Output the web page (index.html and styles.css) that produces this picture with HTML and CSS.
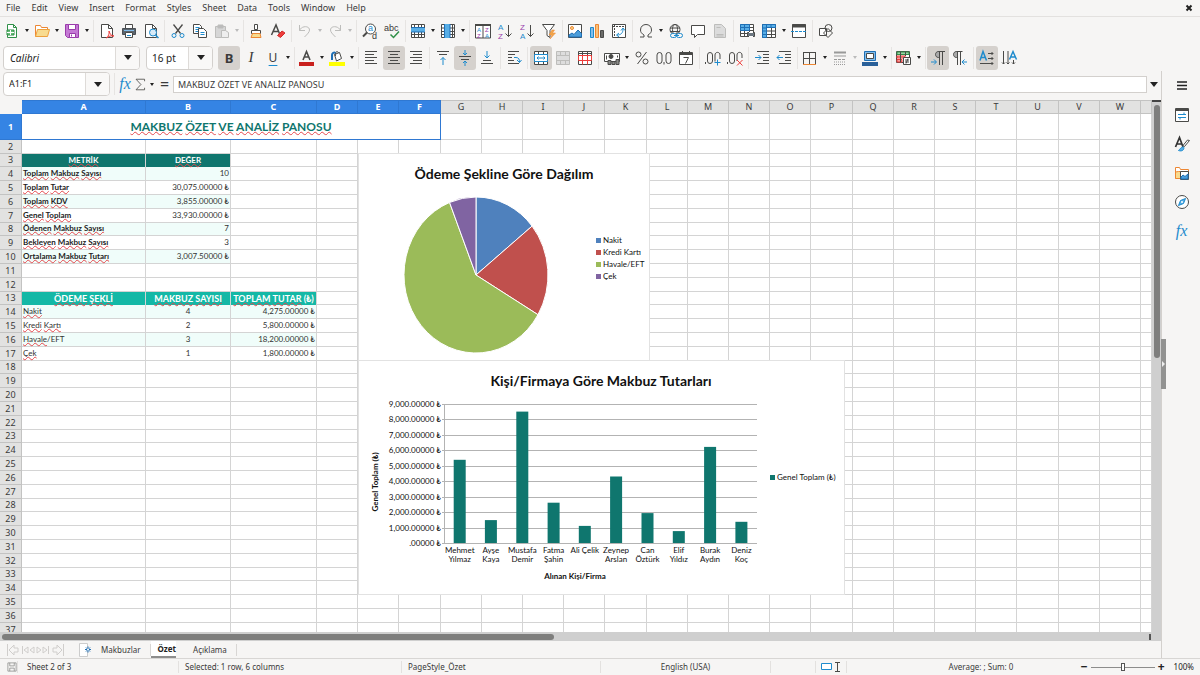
FILE: index.html
```html
<!DOCTYPE html>
<html lang="en">
<head>
<meta charset="utf-8">
<title>Özet</title>
<link rel="stylesheet" href="styles.css">
</head>
<body>
<header class="menubar">
  <nav class="menus">
    <button>File</button><button>Edit</button><button>View</button><button>Insert</button><button>Format</button><button>Styles</button><button>Sheet</button><button>Data</button><button>Tools</button><button>Window</button><button>Help</button>
  </nav>
  <button class="close" aria-label="Close document"><svg class="ico-small" viewBox="0 0 8 8"><path d="M1.500 1.500l5 5M6.500 1.500l-5 5" stroke="#222" stroke-width="2"/></svg></button>
</header>

<div class="toolbar" role="toolbar" aria-label="Standard">
  <button class="tool" aria-label="New"><svg viewBox="0 0 16 16"><path d="M3.500 1.500h6l3 3v10h-9z" fill="#fff" stroke="#309048"/><path d="M9.500 1.500v3h3" stroke="#309048"/><path d="M3 7h7v5H3z" fill="#6abf7b" stroke="#309048"/><path d="M3 9.500h7M6.500 7v5" stroke="#fff"/></svg></button><button class="drop" aria-label="New options"></button>
  <button class="tool" aria-label="Open"><svg viewBox="0 0 16 16"><path d="M1.500 13.500v-11h5l1 2h6v3" fill="#fff" stroke="#ed8733"/><path d="M1.500 13.500l2-7h12l-2 7z" fill="#f8db8f" stroke="#eda03c"/></svg></button><button class="drop" aria-label="Open options"></button>
  <button class="tool" aria-label="Save"><svg viewBox="0 0 16 16"><path d="M1.500 1.500h13v13h-11l-2-2z" fill="#c479d4" stroke="#9a3bab"/><path d="M4.500 1.500h7v5h-7z" fill="#fff" stroke="#9a3bab"/><path d="M5.500 14.500v-4h6v4z" fill="#fff" stroke="#9a3bab"/><path d="M7.500 11.500v2" stroke="#9a3bab"/></svg></button><button class="drop" aria-label="Save options"></button>
  <span class="sep"></span>
  <button class="tool" aria-label="Export as PDF"><svg viewBox="0 0 16 16"><path d="M2.500 1.500h7l4 4v9h-11z" fill="#fff"/><path d="M9.500 1.500v4h4"/><path d="M7.500 15c2-2 3-4 2.500-7 1 3 2 5 5 5-3-.500-5 0-7.500 2z" stroke="#ed3d3b" fill="#fff"/></svg></button>
  <button class="tool" aria-label="Print"><svg viewBox="0 0 16 16"><path d="M4.500 5v-3.500h7V5" fill="#fff"/><path d="M1.500 5.500h13v6h-13z" fill="#5b6670" stroke="#4a4f54"/><path d="M4.500 9.500h7v5h-7z" fill="#fff"/><path d="M3 7.500h10" stroke="#83beec"/><path d="M6 12.500h4" stroke="#1e8bcd"/></svg></button>
  <button class="tool" aria-label="Print preview"><svg viewBox="0 0 16 16"><path d="M2.500 1.500h7l4 4v9h-11z" fill="#fff"/><path d="M9.500 1.500v4h4"/><circle cx="10" cy="9.500" r="3.500" fill="#d8ebf8" stroke="#1e8bcd"/><path d="M12.500 12l3 3" stroke="#1e8bcd" stroke-width="1.500"/></svg></button>
  <span class="sep"></span>
  <button class="tool" aria-label="Cut"><svg viewBox="0 0 16 16"><path d="M3.500 1.500l7 9M12.500 1.500l-7 9" stroke-width="1.300"/><circle cx="4" cy="12.500" r="2" stroke="#1e8bcd"/><circle cx="12" cy="12.500" r="2" stroke="#1e8bcd"/></svg></button>
  <button class="tool" aria-label="Copy"><svg viewBox="0 0 16 16"><path d="M1.500 1.500h6l2 2v7h-8z" fill="#fff"/><path d="M3.500 4.500h4M3.500 6.500h4M3.500 8.500h4" stroke="#1e8bcd"/><path d="M6.500 5.500h5l3 3v6h-8z" fill="#fff"/><path d="M8.500 9.500h4M8.500 11.500h4" stroke="#1e8bcd"/></svg></button>
  <button class="tool dim" aria-label="Paste" disabled><svg viewBox="0 0 16 16"><path d="M1.500 3.500h10v11h-10z" fill="#d6d6d6"/><path d="M4 2h5v3H4z" fill="#bbb"/><path d="M7.500 7.500h4l3 2v5h-7z" fill="#eee"/></svg></button><button class="drop dim" aria-label="Paste options" disabled></button>
  <span class="sep tight"></span>
  <button class="tool" aria-label="Clone formatting"><svg viewBox="0 0 16 16"><path d="M6.500 1.500h3v5h-3z" fill="#fff"/><path d="M3.500 7.500h9v3h-9z" fill="#fff"/><path d="M4.500 10.500h7.500l1 4h-10z" fill="#f8db8f" stroke="#ed8733"/></svg></button>
  <button class="tool" aria-label="Clear formatting"><svg viewBox="0 0 16 16"><path d="M1.500 12l4.500-10 4 10M3.500 8.500h5" stroke-width="1.500"/><path d="M7.500 12.500l4.500-4.500 3 2-4.500 4.500z" fill="#ed3d3b" stroke="#d12b2b"/></svg></button>
  <span class="sep"></span>
  <button class="tool dim" aria-label="Undo" disabled><svg viewBox="0 0 16 16"><path d="M2.500 2v5.500h5.500M2.500 7.500c2-5 10-5 10-.500 0 2-2 4-5 7"/></svg></button><button class="drop dim" aria-label="Undo options" disabled></button>
  <button class="tool dim" aria-label="Redo" disabled><svg viewBox="0 0 16 16"><path d="M13.500 2v5.500h-5.500M13.500 7.500c-2-5-10-5-10-.500 0 2 2 4 5 7"/></svg></button><button class="drop dim" aria-label="Redo options" disabled></button>
  <span class="sep"></span>
  <button class="tool" aria-label="Find and replace"><svg viewBox="0 0 16 16"><circle cx="8.500" cy="6" r="5" fill="#fff"/><path d="M5 9.500l-4 4" stroke-width="2"/><text x="6" y="8" class="g blue">a</text><text x="10" y="16" class="g">d</text></svg></button>
  <button class="tool" aria-label="Spelling"><svg viewBox="0 0 16 16"><text x="0" y="8" class="g abc">abc</text><path d="M6.500 11.500l3 3L15 8.500" stroke="#309048" stroke-width="1.500"/></svg></button>
  <span class="sep tight"></span>
  <button class="tool" aria-label="Row"><svg viewBox="0 0 16 16"><path d="M1.500 1.500h13v13h-13z" fill="#fff"/><path d="M1 5h14v4H1z" fill="#58aee6" stroke="none"/><path d="M1.500 11.500h13M4.500 9v5M8.500 9v5M11.500 9v5M4.500 2v3M8.500 2v3M11.500 2v3"/><path d="M1.500 4.500h13M1.500 9h13" stroke="#1e6fb5"/></svg></button><button class="drop" aria-label="Row options"></button>
  <button class="tool" aria-label="Column"><svg viewBox="0 0 16 16"><path d="M1.500 1.500h13v13h-13z" fill="#fff"/><path d="M5 1h5v14H5z" fill="#58aee6" stroke="none"/><path d="M12.500 2v12M2 5h3M2 8.500h3M2 11.500h3M10 5h4M10 8.500h4M10 11.500h4"/><path d="M4.500 1v14M10 1v14" stroke="#1e6fb5"/></svg></button><button class="drop" aria-label="Column options"></button>
  <span class="sep"></span>
  <button class="tool" aria-label="Sort"><svg viewBox="0 0 16 16"><path d="M.5 1.500h15v13.500h-15zM8 1.500v13.500" fill="#fff"/><path d="M0 2h16" stroke-width="2"/><text x="2" y="8.500" class="g s blue">A</text><text x="2" y="14.500" class="g s purple">Z</text><text x="10" y="8.500" class="g s purple">Z</text><text x="10" y="14.500" class="g s blue">A</text></svg></button>
  <button class="tool" aria-label="Sort ascending"><svg viewBox="0 0 16 16"><text x="1" y="6.500" class="g m blue">A</text><text x="1" y="15.500" class="g m purple">Z</text><path d="M11.500 2v11.500M8.500 10.500l3 3 3-3"/></svg></button>
  <button class="tool" aria-label="Sort descending"><svg viewBox="0 0 16 16"><text x="1" y="6.500" class="g m purple">Z</text><text x="1" y="15.500" class="g m blue">A</text><path d="M11.500 2v11.500M8.500 10.500l3 3 3-3"/></svg></button>
  <button class="tool" aria-label="AutoFilter"><svg viewBox="0 0 16 16"><path d="M1.500 1.500h12l-4.500 6v7l-3-2v-5z" fill="#fff"/><path d="M11 7l-3 5h3l-2 4 5.500-6h-3l2-3z" fill="#f2a64a" stroke="#ed8733" stroke-width=".5"/></svg></button>
  <span class="sep tight"></span>
  <button class="tool" aria-label="Insert image"><svg viewBox="0 0 16 16"><path d="M1.500 1.500h13v13h-13z" fill="#fff"/><circle cx="5" cy="5" r="1.500" fill="#f8db8f" stroke="#ed8733"/><path d="M2 14v-2l3-2 2 1.500 4-4.500 3.500 3.500v3.500z" fill="#4a9ddb" stroke="#1e6fb5"/></svg></button>
  <button class="tool" aria-label="Insert chart"><svg viewBox="0 0 16 16"><path d="M1.500 4.500h3v10h-3z" fill="#83beec" stroke="#1e8bcd"/><path d="M6.500 1.500h3v13h-3z" fill="#f8c27c" stroke="#ed8733"/><path d="M11.500 7.500h3v7h-3z" fill="#6b6b69"/></svg></button>
  <button class="tool" aria-label="Pivot table"><svg viewBox="0 0 16 16"><path d="M1.500 1.500h13v13h-13z" fill="#fff"/><path d="M2 3.500h12M3.500 2v12" stroke-dasharray="2 1"/><path d="M6 12c4 0 6-2 6-6M8 10l-2.500 2L8 14M10 7.500L12 5l2 2.500" stroke="#1e8bcd" fill="none"/></svg></button>
  <span class="sep"></span>
  <button class="tool" aria-label="Special character"><svg viewBox="0 0 16 16"><path d="M2 14h4v-2C3.500 10.500 2.500 9 2.500 7c0-3.500 2.500-5.500 5.500-5.500s5.500 2 5.500 5.500c0 2-1 3.500-3.500 5v2h4"/></svg></button><button class="drop" aria-label="Special character options"></button>
  <button class="tool" aria-label="Hyperlink"><svg viewBox="0 0 16 16"><circle cx="7" cy="6.500" r="5"/><ellipse cx="7" cy="6.500" rx="2.500" ry="5"/><path d="M2 5h10M2 8.500h10"/><rect x="2.500" y="10.500" width="6" height="4" rx="2" stroke="#1e8bcd" fill="#f6f5f4"/><rect x="8.500" y="10.500" width="6" height="4" rx="2" stroke="#1e8bcd" fill="#f6f5f4"/><path d="M6 12.500h5" stroke="#1e8bcd"/></svg></button>
  <button class="tool" aria-label="Comment"><svg viewBox="0 0 16 16"><path d="M1.500 2.500h13v9h-7l-3 3v-3h-3z" fill="#fff"/></svg></button>
  <button class="tool dim" aria-label="Headers and footers" disabled><svg viewBox="0 0 16 16"><path d="M2.500 1.500h7l4 4v9h-11z" fill="#dcdcdc"/><path d="M4.500 4.500h4M4.500 11.500h7M4.500 13h7"/></svg></button>
  <span class="sep"></span>
  <button class="tool" aria-label="Define print area"><svg viewBox="0 0 16 16"><path d="M1.500 1.500h13v12h-13z" fill="#fff"/><path d="M1 1h9.500v6.500H1z" fill="#58aee6" stroke="none"/><path d="M10 4.500h4.500M1.500 7.500h13M1.500 10.500h13M5.500 7.500v6M10.500 2v12"/><path d="M1.500 4.500h9M5.500 1.500v6M1.500 7.500v-6h9v6z" stroke="#1e6fb5"/><path d="M8.500 9.500h7v4h-7z" fill="#6b7680"/><path d="M10 9.500h4M10 13.500h4" stroke="#fff"/></svg></button>
  <button class="tool" aria-label="Freeze rows and columns"><svg viewBox="0 0 16 16"><path d="M1.500 1.500h13v13h-13z" fill="#fff"/><path d="M6 8h9M6 11.500h9M10.500 5v10"/><path d="M1.500 1.500h13v3h-9v10h-4z" fill="#58aee6" stroke="#1e6fb5"/><path d="M1.500 8h4M1.500 11.500h4M10 1.500V5M5.500 1.500V5h-4" stroke="#1e6fb5"/></svg></button><button class="drop" aria-label="Freeze options"></button>
  <button class="tool" aria-label="Split window"><svg viewBox="0 0 16 16"><path d="M1.500 1.500h13v13h-13z" fill="#fff"/><path d="M1 3h14" stroke-width="3"/><path d="M0 8.500h16" stroke="#1e8bcd" stroke-dasharray="3 1"/></svg></button>
  <span class="sep"></span>
  <button class="tool" aria-label="Show draw functions"><svg viewBox="0 0 16 16"><path d="M1.500 5.500h7v7h-7z" fill="#fff"/><circle cx="10.500" cy="5" r="3.500"/><path d="M10 5.500l4.500 4.500-4.500 4.500L5.500 10z"/></svg></button>
</div>

<div class="toolbar" role="toolbar" aria-label="Formatting">
  <div class="combo font"><select aria-label="Font name"><option>Calibri</option></select><span class="arrow"></span></div>
  <div class="combo size"><select aria-label="Font size"><option>16 pt</option></select><span class="arrow"></span></div>
  <button class="tool on bold" aria-label="Bold">B</button>
  <button class="tool italic" aria-label="Italic">I</button>
  <button class="tool under" aria-label="Underline">U</button><button class="drop" aria-label="Underline options"></button>
  <span class="sep tight"></span>
  <button class="tool" aria-label="Font color"><svg viewBox="0 0 16 16"><path d="M4 10L7.500 1.500 11 10M5 7h5" stroke-width="1.600"/><path d="M0 14h15" stroke="#c9211e" stroke-width="4"/></svg></button><button class="drop" aria-label="Font color options"></button>
  <button class="tool" aria-label="Background color"><svg viewBox="0 0 16 16"><path d="M5.500 4.500l5-2 2 6-5 2.500z" fill="#fff"/><path d="M6.500 6c-1-4 2-6 3-3"/><path d="M3 10V5c0-2 2-3 3.500-2" stroke="#1e6fb5" stroke-width="2"/><path d="M0 14h16" stroke="#ff0" stroke-width="4"/></svg></button><button class="drop" aria-label="Background color options"></button>
  <span class="sep"></span>
  <button class="tool" aria-label="Align left"><svg viewBox="0 0 16 16"><path d="M1 1.500h12M1 4.500h9M1 7.500h12M1 10.500h9M1 13.500h12"/></svg></button>
  <button class="tool on" aria-label="Center"><svg viewBox="0 0 16 16"><path d="M2 1.500h12M4 4.500h8M2 7.500h12M4 10.500h8M2 13.500h12"/></svg></button>
  <button class="tool" aria-label="Align right"><svg viewBox="0 0 16 16"><path d="M2 1.500h12M5 4.500h9M2 7.500h12M5 10.500h9M2 13.500h12"/></svg></button>
  <span class="sep"></span>
  <button class="tool" aria-label="Align top"><svg viewBox="0 0 16 16"><path d="M2 1.500h12M4 4.500h8"/><path d="M8 15V7.500M5.500 10L8 7.500l2.500 2.500" stroke="#1e8bcd"/></svg></button>
  <button class="tool on" aria-label="Center vertically"><svg viewBox="0 0 16 16"><path d="M2 6.500h12M4 9.500h8"/><path d="M8 0v5M6 3l2 2 2-2M8 16v-5M6 13l2-2 2 2" stroke="#1e8bcd"/></svg></button>
  <button class="tool" aria-label="Align bottom"><svg viewBox="0 0 16 16"><path d="M4 10.500h8M2 13.500h12"/><path d="M8 1v7M5.500 5.500L8 8l2.500-2.500" stroke="#1e8bcd"/></svg></button>
  <span class="sep"></span>
  <button class="tool" aria-label="Wrap text"><svg viewBox="0 0 16 16"><path d="M2 1.500h11M2 4.500h7M2 7.500h4M2 10.500h6M2 13.500h11"/><path d="M8 7.500h2c3 0 3.500 2 3.500 5M11 10l2.500 2.500L15.500 10" stroke="#1e8bcd"/></svg></button>
  <span class="sep"></span>
  <button class="tool on" aria-label="Merge and center"><svg viewBox="0 0 16 16"><path d="M1.500 1.500h13v13h-13z" fill="#fff"/><path d="M5.500 1.500v13M10.500 1.500v13"/><path d="M1.500 4.500h13v7h-13z" fill="#fff" stroke="#1e8bcd"/><path d="M4 8h8M5.500 6.500L4 8l1.500 1.500M10.500 6.500L12 8l-1.500 1.500" stroke="#1e8bcd"/></svg></button>
  <button class="tool dim" aria-label="Merge cells" disabled><svg viewBox="0 0 16 16"><path d="M1.500 1.500h13v13h-13z" fill="#ddd"/><path d="M1.500 5.500h13M1.500 10.500h13M5.500 1.500v4M10.500 1.500v4M5.500 10.500v4M10.500 10.500v4"/></svg></button>
  <button class="tool" aria-label="Unmerge cells"><svg viewBox="0 0 16 16"><path d="M1.500 1.500h13v13h-13z" fill="#fff"/><path d="M5.500 1.500v13M10.500 1.500v13M1.500 3.500h13"/><path d="M1.500 5.500h13v5h-13zM5.500 5.500v9M10.500 5.500v9" stroke="#ed3d3b"/></svg></button>
  <span class="sep"></span>
  <button class="tool" aria-label="Currency"><svg viewBox="0 0 16 16"><path d="M.5 3.500h15v8H.5z" fill="#fff"/><circle cx="7" cy="6.500" r="2" fill="#4a4a48"/><path d="M2.500 5.500v4M13.500 5.500v2"/><path d="M4 10.500h3v4H4zM8 11.500h3v3H8zM12 9.500h3v5h-3z" fill="#8a8a88"/></svg></button><button class="drop" aria-label="Currency options"></button>
  <button class="tool" aria-label="Percent"><svg viewBox="0 0 16 16"><circle cx="4.500" cy="4.500" r="2.500"/><circle cx="11.500" cy="11.500" r="2.500"/><path d="M12.500 2l-9 12"/></svg></button>
  <button class="tool" aria-label="Number"><svg viewBox="0 0 16 16"><rect x="1" y="2.500" width="5" height="11" rx="2.500"/><rect x="10" y="2.500" width="5" height="11" rx="2.500"/><path d="M8 12v2.500"/></svg></button>
  <button class="tool" aria-label="Date"><svg viewBox="0 0 16 16"><path d="M1.500 2.500h13v12h-13z" fill="#fff"/><path d="M1.500 4h13" stroke-width="2"/><path d="M4.500 1v3M11.500 1v3M5.500 7.500h5l-3 6"/></svg></button>
  <span class="sep"></span>
  <button class="tool" aria-label="Add decimal place"><svg viewBox="0 0 16 16"><path d="M.5 12v2"/><rect x="2.500" y="2.500" width="5" height="11" rx="2.500"/><path d="M10 11.500V5c0-3.500 5-3.500 5 0v4"/><path d="M12.500 9.500v6M9.500 12.500h6" stroke="#1e8bcd"/></svg></button>
  <button class="tool" aria-label="Delete decimal place"><svg viewBox="0 0 16 16"><path d="M.5 12v2"/><rect x="2.500" y="2.500" width="5" height="11" rx="2.500"/><path d="M10 11V5c0-3.500 5-3.500 5 0v3"/><path d="M10 10l5.500 5.500M15.500 10L10 15.500" stroke="#ed3d3b"/></svg></button>
  <span class="sep"></span>
  <button class="tool" aria-label="Increase indent"><svg viewBox="0 0 16 16"><path d="M3 1.500h12M9 4.500h6M9 7.500h6M9 10.500h6M3 13.500h12"/><path d="M1 7.500h6M4.500 5L7 7.500 4.500 10" stroke="#1e8bcd"/></svg></button>
  <button class="tool" aria-label="Decrease indent"><svg viewBox="0 0 16 16"><path d="M3 1.500h12M9 4.500h6M9 7.500h6M9 10.500h6M3 13.500h12"/><path d="M1 7.500h6M3.500 5L1 7.500 3.500 10" stroke="#1e8bcd"/></svg></button>
  <span class="sep tight"></span>
  <button class="tool" aria-label="Borders"><svg viewBox="0 0 16 16"><path d="M1.500 2v12M7.500 2v12M13.500 2v12M1 2.500h13M1 8.500h13"/><path d="M1 14.500h13" stroke="#ed8733"/></svg></button><button class="drop" aria-label="Border options"></button>
  <button class="tool" aria-label="Border style"><svg viewBox="0 0 16 16"><path d="M2 2.500h12" stroke="#999" stroke-width="2"/><path d="M2 6h12" stroke="#999"/><path d="M2 9.500h12" stroke="#999" stroke-dasharray="3 1"/><path d="M2 12h12M2 14.500h12" stroke="#999" stroke-dasharray="1 1"/></svg></button><button class="drop dim" aria-label="Border style options" disabled></button>
  <button class="tool" aria-label="Border color"><svg viewBox="0 0 16 16"><path d="M2.500 1.500h11v9h-11z" fill="#83beec" stroke="#1e6fb5"/><path d="M4.500 3.500h7v5h-7z" fill="#fff"/><path d="M0 14h16" stroke="#2a6099" stroke-width="4"/></svg></button><button class="drop" aria-label="Border color options"></button>
  <span class="sep tight"></span>
  <button class="tool" aria-label="Conditional formatting"><svg viewBox="0 0 16 16"><path d="M.5 1.500h13v11H.5z" fill="#fff"/><path d="M1 2h12v2.500H1z" fill="#9bd3a6" stroke="#309048"/><path d="M1 6h8v2H1zM1 9.500h5v2.500H1z" fill="#f2a09e" stroke="#ed3d3b"/><path d="M4.500 2v10M9.500 2v4"/><path d="M7.500 7.500h7v7h-7z" fill="#fff"/><path d="M9 10h4M9 12h4M12 8.500l-2 5"/></svg></button><button class="drop" aria-label="Conditional options"></button>
  <span class="sep tight"></span>
  <button class="tool on" aria-label="Left-to-right"><svg viewBox="0 0 16 16"><path d="M8.500 1.500c-4 0-4 6 0 6h1v-6z" fill="#aaa"/><path d="M9.500 15V1.500M12.500 15V1.500M15 1.500H8.500"/><path d="M1 12h5M4 9.500L6.500 12 4 14.500" stroke="#1e8bcd"/></svg></button>
  <button class="tool" aria-label="Right-to-left"><svg viewBox="0 0 16 16"><path d="M4.500 1.500c-4 0-4 6 0 6h1v-6z" fill="#aaa"/><path d="M5.500 15V1.500M8.500 15V1.500M10.500 1.500h-6"/><path d="M10 12h5M12.500 9.500L10 12l2.500 2.500" stroke="#1e8bcd"/></svg></button>
  <span class="sep"></span>
  <button class="tool on" aria-label="Text direction left to right"><svg viewBox="0 0 16 16"><path d="M1 10.500L4 1.500l3.500 9M2 7.500h5" stroke="#1e8bcd" stroke-width="1.500"/><path d="M9 3.500h5M12.500 2L14 3.500 12.500 5M9 8.500h5M12.500 7L14 8.500 12.500 10M1 13.500h13M12.500 12l1.500 1.500-1.500 1.500"/></svg></button>
  <button class="tool" aria-label="Text direction top to bottom"><svg viewBox="0 0 16 16"><path d="M8.500 9.500L12 1.500l3.500 8M9.500 7h5" stroke="#1e8bcd" stroke-width="1.500"/><path d="M2.500 1v13M1 12.500L2.500 14 4 12.500M7 1v13M5.500 12.500L7 14l1.500-1.500M12.500 10v4M11 12.500l1.500 1.500 1.500-1.500"/></svg></button>
</div>

<main class="main">
  <section class="work">
    <div class="formula">
      <div class="combo name"><input aria-label="Name box" value="A1:F1"><button class="arrow" aria-label="Name list"></button></div>
      <span class="sep"></span>
      <button class="fx" aria-label="Function wizard">fx</button>
      <button class="sum" aria-label="Select function"><svg viewBox="0 0 16 16"><path d="M13 4V1.500H2.500L8.500 8l-6 6.500H13V12"/></svg></button><button class="drop" aria-label="Function list"></button>
      <button class="equals" aria-label="Formula">=</button>
      <input class="line" aria-label="Input line" value="MAKBUZ ÖZET VE ANALİZ PANOSU">
      <button class="expand" aria-label="Expand formula bar"><span class="arrow"></span></button>
    </div>
    <div class="view">
      <div class="sheet">
        <table class="cells">
          <colgroup id="cols"></colgroup>
          <thead id="head"></thead>
          <tbody id="rows"></tbody>
        </table>
        <figure class="chart pie"><svg id="pie" viewBox="0 0 290 206" role="img" aria-label="Ödeme Şekline Göre Dağılım"></svg></figure>
        <figure class="chart bars"><svg id="bars" viewBox="0 0 485 233" role="img" aria-label="Kişi/Firmaya Göre Makbuz Tutarları"></svg></figure>
      </div>
      <div class="vscroll"><div class="thumb"></div></div>
    </div>
    <div class="hscroll"><div class="thumb"></div><div class="split"></div></div>
    <div class="tabs">
      <div class="steps">
        <button aria-label="First sheet"><svg viewBox="0 0 14 12"><path d="M1.500 0v12M8 1L3 6l5 5V8h4V4H8z"/></svg></button><button aria-label="Previous sheet"><svg viewBox="0 0 14 12"><path d="M1.500 2v8M7 3L3 6l4 3zM13 3L9 6l4 3z"/></svg></button><button aria-label="Next sheet"><svg viewBox="0 0 14 12"><path d="M1 3l4 3-4 3zM7 3l4 3-4 3zM12.500 2v8"/></svg></button><button aria-label="Last sheet"><svg viewBox="0 0 14 12"><path d="M12.500 0v12M6 1l5 5-5 5V8H2V4h4z"/></svg></button>
      </div>
      <button class="add" aria-label="Add sheet"><svg viewBox="0 0 16 16"><path d="M3.500 1.500h8v13h-8z" fill="#fff" stroke="#ccc"/><path d="M9 7.500h6M12 4.500v6M10 5.500l4 4M14 5.500l-4 4" stroke="#1e6fb5"/><circle cx="12" cy="7.500" r="1" fill="#fff" stroke="none"/></svg></button>
      <button class="tab">Makbuzlar</button><button class="tab current">Özet</button><button class="tab">Açıklama</button>
    </div>
  </section>
  <aside class="sidebar">
    <button aria-label="Sidebar settings"><svg viewBox="0 0 16 16"><path d="M3 4h10M3 7.500h10M3 11h10" stroke="#222" stroke-width="1.400"/></svg></button>
    <button aria-label="Properties"><svg viewBox="0 0 16 16"><path d="M1.500 1.500h13v13h-13z" fill="#fff"/><path d="M1 3h14" stroke-width="2"/><path d="M4 7.500h8M10 5.500v2M4 10.500h8M6 10.500v2" stroke="#1e8bcd"/></svg></button>
    <button aria-label="Styles"><svg viewBox="0 0 16 16"><path d="M1.500 11l4-9.500 3.500 9.500M3 8h5" stroke-width="1.700" stroke="#333"/><path d="M15.500 4.500l-5 6-1.500-1 4.500-5.500z" fill="#fff"/><path d="M4.500 14.500c3 1 5.500 0 5.500-3-2-1.500-3 .500-5.500 3z" fill="#58aee6" stroke="#1e8bcd"/></svg></button>
    <button aria-label="Gallery"><svg viewBox="0 0 16 16"><path d="M1.500 13.500v-11h4l1 2h8v3" fill="#fff" stroke="#ed8733"/><path d="M1.500 13.500V7l3-.500h8v7z" fill="#f8db8f" stroke="#ed8733"/><path d="M6.500 6.500h8v8h-8z" fill="#fff"/><path d="M7 14v-2l2-2 2 1.500 3-2.500v5z" fill="#4a9ddb" stroke="#1e6fb5"/></svg></button>
    <button aria-label="Navigator"><svg viewBox="0 0 16 16"><circle cx="8" cy="8" r="6.500" fill="#fff"/><path d="M11.500 4.500l-2 5-5 2 2-5z" fill="#58aee6" stroke="#1e8bcd"/><circle cx="8" cy="8" r="1" fill="#fff" stroke="none"/></svg></button>
    <button class="fx" aria-label="Functions">fx</button>
    <div class="handle"></div>
  </aside>
</main>

<footer class="status">
  <span class="cell"><svg viewBox="0 0 16 16"><path d="M2.500 2.500h11v11h-11zM5 2.500v4h6v-4M5 13.500v-4h6v4" stroke="#8a8a88"/></svg></span>
  <span class="cell first">Sheet 2 of 3</span>
  <span class="cell">Selected: 1 row, 6 columns</span>
  <span class="cell">PageStyle_Özet</span>
  <span class="cell mid">English (USA)</span>
  <span class="cell"></span>
  <span class="cell mid"><svg class="mode" viewBox="0 0 22 12"><path d="M1.500 2.500h10v6h-10z" stroke="#1e8bcd" fill="#fff"/><path d="M15 1.500h5M17.500 1.500v9M15 10.500h5"/></svg></span>
  <span class="cell mid total">Average: ; Sum: 0</span>
  <span class="zoom"><button aria-label="Zoom out">−</button><input type="range" aria-label="Zoom" min="0" max="100" value="50"><button aria-label="Zoom in">+</button><button class="percent">100%</button></span>
</footer>
<script src="app.js"></script>
</body>
</html>
```

FILE: styles.css
```css
* { box-sizing: border-box; }
body {
  margin: 0; height: 100vh; display: flex; flex-direction: column; overflow: hidden;
  background: #f6f5f4; color: #3a3a3a; font: 9px/12px "Noto Sans", "Open Sans", sans-serif;
}
button, input, select { font: inherit; color: inherit; margin: 0; padding: 0; border: 0; background: none; }
button { display: flex; align-items: center; justify-content: center; }
svg { display: block; overflow: visible; fill: none; stroke: #4a4a48; stroke-width: 1; flex: none; }
text { stroke: none; }

.menubar { display: flex; justify-content: space-between; height: 17px; border-bottom: 1px solid #e3e1df; padding: 0 7px 0 6px; flex: none; }
.menus { display: flex; gap: 11px; }
.ico-small { width: 8px; height: 8px; }

.toolbar { display: flex; align-items: center; height: 27px; padding-left: 1px; flex: none; }
.tool { width: 22px; height: 24px; border-radius: 3px; flex: none; }
.tool svg { width: 16px; height: 16px; }
.tool.on { background: #d5d1cd; }
.tool.dim svg { stroke: #bdbdbb; }
.tool.bold { font-size: 13px; font-weight: 700; }
.tool.italic { font: italic 15px "Liberation Serif", serif; }
.tool.under { font-size: 12px; text-decoration: underline #1e8bcd 1px; text-underline-offset: 3px; }
.drop { width: 8px; height: 22px; flex: none; }
.drop::after, .arrow::after { content: ""; border: 2px solid transparent; border-top: 3px solid #222; border-bottom: 0; }
.drop.dim::after { border-top-color: #bbb; }
.sep { width: 1px; height: 22px; margin: 0 2px; background: #e6e4e2; flex: none; }
.sep.tight { margin: 0 1px 0 2px; }
.g { font-family: "Liberation Sans", sans-serif; font-size: 9px; fill: #3a3a38; }
.g.m { font-size: 8px; }
.g.s { font-size: 6px; }
.g.blue { fill: #1e8bcd; }
.g.purple { fill: #9a3bab; }

.combo { position: relative; display: flex; height: 24px; border: 1px solid #d3d0cd; border-radius: 4px; background: #fff; overflow: hidden; flex: none; }
.combo select, .combo input { flex: 1; min-width: 0; padding-left: 6px; appearance: none; font-size: 10px; color: #222; outline: 0; }
.combo .arrow { width: 24px; border-left: 1px solid #dedbd8; background: #f9f8f7; display: flex; align-items: center; justify-content: center; }
.combo span.arrow { position: absolute; right: 0; top: 0; bottom: 0; pointer-events: none; }
.arrow::after { border-width: 5px 4px 0; }
.combo.font { width: 137px; margin: 0 6px 0 2px; }
.combo.font select { font-style: italic; }
.combo.size { width: 67px; margin-right: 5px; }
.combo.size select { padding-left: 5px; }
.combo.name { width: 107px; margin: 0 2px 0 3px; }
.combo.name input { font-size: 9px; padding-left: 5px; }

.main { display: flex; flex: 1; min-height: 0; }
.work { display: flex; flex-direction: column; flex: 1; min-width: 0; }
.formula { display: flex; align-items: center; height: 26px; margin-bottom: 3px; flex: none; }
.fx { font: italic 16px "Liberation Serif", serif; color: #1e8bcd; width: 16px; }
.sum { width: 15px; }
.sum svg { width: 13px; height: 13px; }
.formula .equals { width: 17px; font-size: 16px; }
.line { flex: 1; min-width: 0; height: 17px; border: 1px solid #d3d0cd; background: #fff; padding-left: 4px; }
.expand { width: 14px; }
.expand .arrow { display: flex; }

.view { display: flex; flex: 1; min-height: 0; }
.sheet { position: relative; flex: 1; min-width: 0; overflow: hidden; background: #fff; }
.cells { width: 100%; table-layout: fixed; border-collapse: separate; border-spacing: 0; }
.cells td, .cells th { padding: 0 1px; border-right: 1px solid #d4d4d4; border-bottom: 1px solid #d4d4d4; white-space: nowrap; line-height: 12px; }
.cells td { font-family: Lato, sans-serif; font-size: 8px; line-height: 11px; padding: 0 1px 1px 1px; vertical-align: bottom; color: #333; }
.cells th { font-weight: 400; background: #e2e2e1; border-color: #c3c3c2; }
.cells tr { height: 14px; }
.cells thead th { height: 14px; border-top: 1px solid #c3c3c2; }
.cells th.sel { background: #3584e4; color: #fff; border-color: #2f78d2; font-weight: 700; }
.cells thead th.corner { background: #f6f5f4; border-color: #f6f5f4; }
.cells tbody tr:nth-child(5n+3) { height: 13px; }
.cells tbody tr:first-child { height: 26px; }
.cells tbody tr:first-child td { vertical-align: middle; }
.col-head { width: 22px; }
.col-a { width: 124px; }
.col-b { width: 85px; }
.col-c { width: 86px; }
.col { width: 41px; }
.col-wide { width: 42px; }
.cells td.title { border-color: #2f78d2; font-size: 12px; font-weight: 700; color: #0f766e; text-align: center; }
.cells td.dark, .cells td.teal { background: #0f766e; color: #fff; font-weight: 700; text-align: center; border-bottom: 0; }
.cells td.teal { background: #14b8a6; font-size: 9px; padding: 0 0 1px; }
.cells td.tint { background: #f0fdfa; }
.cells td.label { font-weight: 700; color: #222; }
.cells td.num { text-align: right; }
.cells td.mid { text-align: center; }
.spell { text-decoration: underline wavy #e5484d 1px; text-decoration-skip-ink: none; text-underline-offset: 0; }

.chart { position: absolute; margin: 0; background: #fff; border: 1px solid #e2e2e2; left: 358px; }
.chart svg { width: 100%; height: 100%; stroke: none; font-family: Lato, sans-serif; font-size: 8px; fill: #111; }
.pie { top: 53px; width: 292px; height: 208px; }
.bars { top: 260px; width: 487px; height: 235px; }
.heading { font-size: 14px; font-weight: 700; }
.strong { font-weight: 700; }
.end { text-anchor: end; }
.center { text-anchor: middle; }

.vscroll { width: 9px; background: #cfcfcf; border-top: 2px solid #444; padding: 3px 1px 0 2px; }
.vscroll .thumb { width: 6px; height: 48%; border-radius: 3px; background: #7e7e7d; }
.hscroll { display: flex; justify-content: space-between; height: 9px; background: #cfcfcf; padding: 2px 10px 1px 2px; flex: none; }
.hscroll .thumb { width: 48%; border-radius: 3px; background: #7e7e7d; }
.hscroll .split { width: 2px; background: #555; }
.tabs { display: flex; height: 17px; padding-left: 6px; font-size: 8px; flex: none; }
.steps { display: flex; width: 64px; gap: 1px; }
.steps svg { width: 14px; height: 12px; stroke: #d0cecc; }
.add { width: 28px; }
.add svg { width: 16px; height: 16px; }
.tab { padding: 0 9px 0 3px; border-right: 1px solid #d8d6d4; margin: 3px 0 2px; }
.tab.current { margin: 0; padding: 0 0 0 7px; border: 0; border-bottom: 2px solid #8d8d8c; background: #fff; font-weight: 700; color: #222; }
.tab:last-child { padding-left: 17px; }

.sidebar { position: relative; width: 39px; border-left: 1px solid #d3d0cd; display: flex; flex-direction: column; align-items: center; padding-left: 1px; }
.sidebar button { width: 24px; height: 29px; flex: none; }
.sidebar svg { width: 16px; height: 16px; }
.handle { position: absolute; left: -1px; top: calc(50% - 26px); width: 5px; height: 50px; background: #929291; }
.handle::after { content: ""; position: absolute; left: 1px; top: 22px; border: 3px solid transparent; border-left-color: #eee; border-right: 0; }

.status { display: grid; grid-template-columns: 18px 161fr 223fr 199fr 170fr 45fr 31fr 230fr 123fr; align-items: center; height: 17px; border-top: 1px solid #d8d6d4; font-size: 8px; flex: none; }
.status .cell { padding-left: 6px; height: 12px; border-right: 1px solid #e3e1df; white-space: nowrap; }
.status .first { padding-left: 9px; }
.status .mid { padding: 0; text-align: center; display: flex; justify-content: center; }
.status .total { padding-left: 38px; border: 0; }
.status svg { width: 12px; height: 12px; }
.status .mode { width: 22px; }
.zoom { display: flex; align-items: center; justify-content: flex-end; gap: 3px; padding-right: 6px; }
.zoom button { font-weight: 700; font-size: 12px; color: #222; }
.zoom .percent { font-weight: 400; font-size: 8px; margin-left: 6px; }
.zoom input { width: 64px; height: 12px; appearance: none; background: linear-gradient(#8d8d8c, #8d8d8c) center / 100% 1px no-repeat; }
.zoom input::-webkit-slider-thumb { appearance: none; width: 4px; height: 8px; border: 1px solid #555; background: #fff; }
```

FILE: app.js
```javascript
const letters = "ABCDEFGHIJKLMNOPQRSTUVW".split("");
const wide = "FKPU";

document.getElementById("cols").innerHTML = '<col class="col-head">' + letters.map(l =>
  `<col class="${"ABC".includes(l) ? "col-" + l.toLowerCase() : wide.includes(l) ? "col-wide" : "col"}">`).join("") + "<col>";

document.getElementById("head").innerHTML = '<tr><th class="corner"></th>' + letters.map((l, i) =>
  `<th class="${i < 6 ? "sel" : ""}">${l}</th>`).join("") + "<th></th></tr>";

const spell = text => text.replace(/[^\s\/()₺]+/g, w => w === "EFT" ? w : `<span class="spell">${w}</span>`);

const metrics = [
  ["Toplam Makbuz Sayısı", "10"], ["Toplam Tutar", "30,075.00000 ₺"], ["Toplam KDV", "3,855.00000 ₺"],
  ["Genel Toplam", "33,930.00000 ₺"], ["Ödenen Makbuz Sayısı", "7"], ["Bekleyen Makbuz Sayısı", "3"],
  ["Ortalama Makbuz Tutarı", "3,007.50000 ₺"]
];
const payments = [
  ["Nakit", "4", "4,275.00000 ₺"], ["Kredi Kartı", "2", "5,800.00000 ₺"],
  ["Havale/EFT", "3", "18,200.00000 ₺"], ["Çek", "1", "1,800.00000 ₺"]
];

const content = { 1: [`<td class="title" colspan="6">${spell("MAKBUZ ÖZET VE ANALİZ PANOSU")}</td>`, 6] };
content[3] = [["METRİK", "DEĞER"].map(t => `<td class="dark">${spell(t)}</td>`).join(""), 2];
metrics.forEach(([name, value], i) => {
  const tint = i % 2 ? "" : " tint";
  content[4 + i] = [`<td class="label${tint}">${spell(name)}</td><td class="num${tint}">${value}</td>`, 2];
});
content[13] = [["ÖDEME ŞEKLİ", "MAKBUZ SAYISI", "TOPLAM TUTAR (₺)"].map(t => `<td class="teal">${spell(t)}</td>`).join(""), 3];
payments.forEach(([name, count, total], i) => {
  const tint = i % 2 ? "" : " tint";
  content[14 + i] = [`<td class="${tint}">${spell(name)}</td><td class="mid${tint}">${count}</td><td class="num${tint}">${total}</td>`, 3];
});

let rows = "";
for (let r = 1; r <= 37; r++) {
  const [cells, used] = content[r] || ["", 0];
  rows += `<tr><th class="${r === 1 ? "sel" : ""}">${r}</th>${cells}${"<td></td>".repeat(24 - used)}</tr>`;
}
document.getElementById("rows").innerHTML = rows;

/* Pie chart */
const slices = [["Nakit", 4275, "#4f81bd"], ["Kredi Kartı", 5800, "#c0504d"], ["Havale/EFT", 18200, "#9bbb59"], ["Çek", 1800, "#8064a2"]];
const sum = slices.reduce((s, d) => s + d[1], 0);
const at = share => {
  const a = share * 2 * Math.PI;
  return `${(117 + 72 * Math.sin(a)).toFixed(2)} ${(121 - 78 * Math.cos(a)).toFixed(2)}`;
};
let pie = '<text class="heading center" x="145" y="25">Ödeme Şekline Göre Dağılım</text>';
let from = 0;
slices.forEach(([name, value, color], i) => {
  const to = from + value / sum;
  pie += `<path d="M117 121L${at(from)}A72 78 0 ${to - from > 0.5 ? 1 : 0} 1 ${at(to)}Z" fill="${color}" stroke="#fff"/>`;
  const y = 84 + i * 12;
  pie += `<rect x="237" y="${y}" width="5" height="5" fill="${color}"/><text x="244" y="${y + 5}">${name}</text>`;
  from = to;
});
document.getElementById("pie").innerHTML = pie;

/* Bar chart */
const people = [["Mehmet Yılmaz", 5370], ["Ayşe Kaya", 1475], ["Mustafa Demir", 8480], ["Fatma Şahin", 2600], ["Ali Çelik", 1100],
  ["Zeynep Arslan", 4290], ["Can Öztürk", 1930], ["Elif Yıldız", 770], ["Burak Aydın", 6200], ["Deniz Koç", 1370]];
const base = 182, left = 85, right = 398, span = 139.5, step = (right - left) / people.length;
let bars = '<text class="heading center" x="242" y="25">Kişi/Firmaya Göre Makbuz Tutarları</text>';
for (let k = 0; k <= 9; k++) {
  const y = Math.round(base - k * span / 9);
  bars += `<path d="M${left - 2} ${y}.5H${right}" stroke="#b3b3b3"/><text class="end" x="82" y="${y + 3}">${k ? k + ",000" : ""}.00000 ₺</text>`;
}
bars += `<path d="M${left}.5 ${base - 139}V${base}" stroke="#b3b3b3"/>`;
people.forEach(([name, value], i) => {
  const x = left + step * (i + 0.5), h = value / 9000 * span;
  bars += `<rect x="${(x - 6).toFixed(1)}" y="${(base - h).toFixed(1)}" width="12" height="${h.toFixed(1)}" fill="#0f766e"/>`;
  const lines = name === "Ali Çelik" ? [name] : name.split(" ");
  lines.forEach((t, n) => { bars += `<text class="center" x="${x.toFixed(1)}" y="${192 + n * 9}">${t}</text>`; });
});
bars += '<text class="strong center" x="216" y="218">Alınan Kişi/Firma</text>';
bars += '<text class="strong center" transform="translate(19 121) rotate(-90)">Genel Toplam (₺)</text>';
bars += '<rect x="411" y="114" width="5" height="5" fill="#0f766e"/><text x="418" y="119">Genel Toplam (₺)</text>';
document.getElementById("bars").innerHTML = bars;
```
